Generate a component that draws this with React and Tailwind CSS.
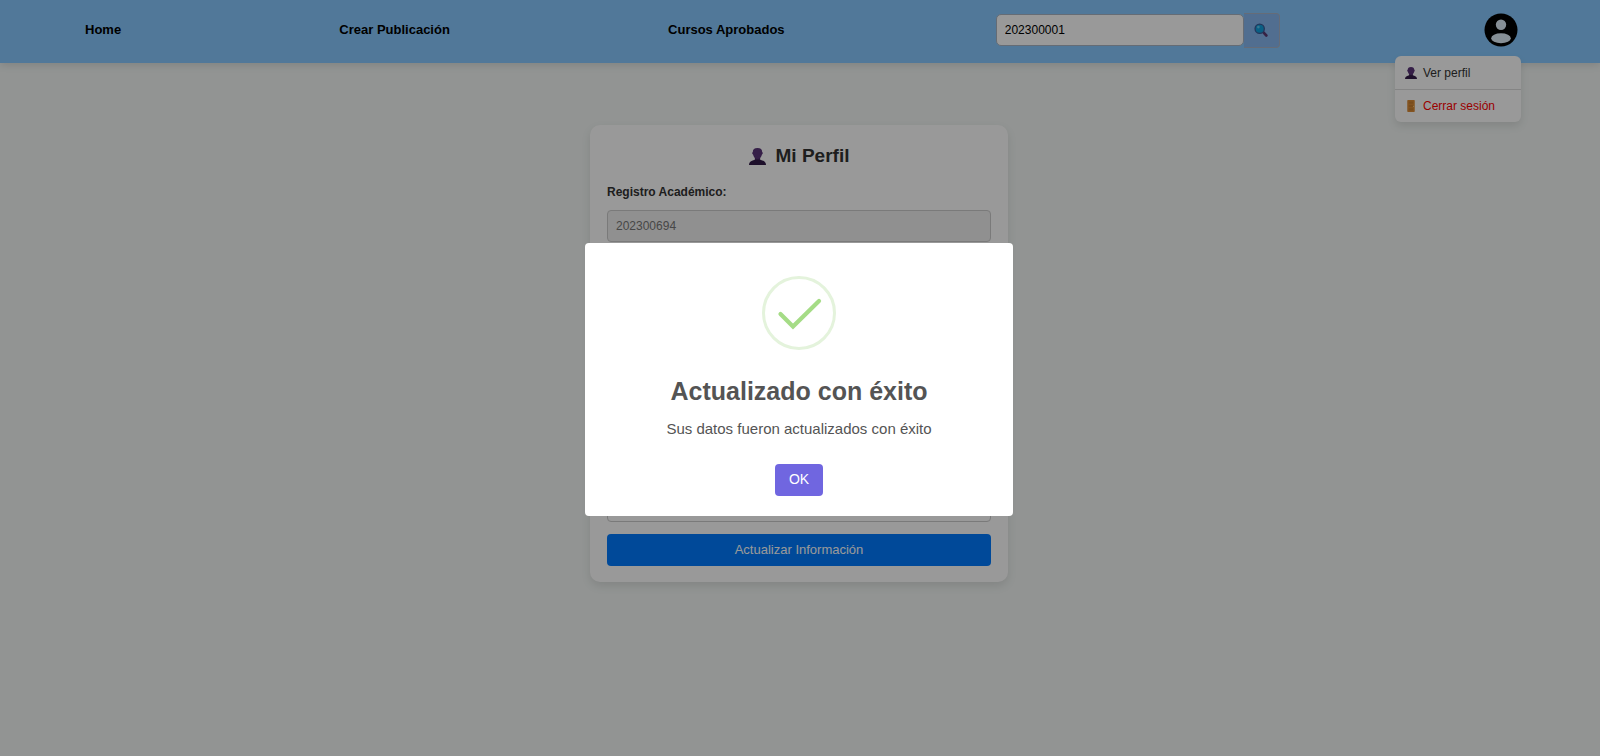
import React from "react";

function PersonIcon({ className }) {
  return (
    <svg viewBox="0 0 16 16" className={className} aria-hidden="true">
      <path d="M5.500 8h5v4h-5z" fill="#472860" />
      <path d="M8 0C5 0 3.600 1.500 3.600 3.800c-.8.200-.8 2 .2 2.400C4.300 8.800 6 10.400 8 10.400s3.700-1.600 4.200-4.200c1-.4 1-2.200.2-2.400C12.400 1.500 11 0 8 0z" fill="#5a3478" />
      <path d="M0 16c0-2.600 1.400-4 5.500-5h5c4.100 1 5.500 2.400 5.500 5z" fill="#331c49" />
    </svg>
  );
}

function DoorIcon({ className }) {
  return (
    <svg viewBox="0 0 16 16" className={className} aria-hidden="true">
      <rect x="3" y="0" width="10" height="16" rx="1" fill="#dc8d38" />
      <rect x="5" y="2" width="6" height="3" fill="#c97f31" />
      <rect x="5" y="6.500" width="6" height="3" fill="#c97f31" />
      <rect x="5" y="11" width="6" height="3" fill="#c97f31" />
      <circle cx="11.500" cy="8.500" r=".7" fill="#ffd27a" />
    </svg>
  );
}

function SearchIcon({ className }) {
  return (
    <svg viewBox="0 0 16 16" className={className} aria-hidden="true">
      <path d="M10.500 10.500l3.600 3.800" stroke="#5c3a72" strokeWidth="3" strokeLinecap="round" />
      <circle cx="6.500" cy="6.500" r="5.300" fill="#0f9fdc" stroke="#3a5c98" strokeWidth="1.500" />
      <circle cx="5" cy="4.700" r="1.500" fill="#5cc8f2" />
    </svg>
  );
}

function AvatarIcon({ className }) {
  return (
    <svg viewBox="0 0 34 34" className={className} aria-hidden="true">
      <circle cx="17" cy="17" r="16.500" fill="#000" />
      <circle cx="17" cy="11.800" r="5.200" fill="#e0eefa" />
      <ellipse cx="17" cy="25.300" rx="9.800" ry="5" fill="#e0eefa" />
    </svg>
  );
}

const links = ["Home", "Crear Publicación", "Cursos Aprobados"];

const fields = [
  { id: "registro", label: "Registro Académico:", value: "202300694", disabled: true },
  { id: "nombres", label: "Nombres:" },
  { id: "apellidos", label: "Apellidos:" },
  { id: "correo", label: "Correo:" },
  { id: "clave", label: "Contraseña:", type: "password" },
];

function Header() {
  return (
    <header className="relative bg-[#87c9ff] pb-[3px] shadow-[0_2px_8px_rgba(0,0,0,0.12)]">
      <nav className="flex h-[60px] items-center justify-between pr-[82px] pl-[78px]">
        {links.map((text) => (
          <a key={text} href="#" className="px-[7px] text-[13px] leading-5 font-bold text-black">
            {text}
          </a>
        ))}
        <form className="flex items-center">
          <input
            aria-label="Buscar registro"
            defaultValue="202300001"
            className="h-8 w-[248px] rounded-[5px] border border-[#a8b4c4] bg-white px-2 text-[12px] text-black"
          />
          <button
            type="button"
            aria-label="Buscar"
            className="flex h-[35px] w-[36px] items-center justify-center rounded-r-[4px] border border-l-0 border-[#a8b4c8] bg-[#88b7f0]"
          >
            <SearchIcon className="size-[14px]" />
          </button>
        </form>
        <button type="button" aria-label="Menú de usuario">
          <AvatarIcon className="size-[34px]" />
        </button>
      </nav>
      <div className="absolute top-[56px] right-[79px] w-[126px] overflow-hidden rounded-[6px] bg-white pt-px text-[12px] leading-4 shadow-[0_4px_8px_rgba(0,0,0,0.1)]">
        <a href="#" className="flex items-center gap-1.5 border-b border-[#dddddd] px-[10px] py-2 text-[#333333]">
          <PersonIcon className="size-3" />
          Ver perfil
        </a>
        <a href="#" className="flex items-center gap-1.5 px-[10px] py-2 text-[#ff0000]">
          <DoorIcon className="size-3" />
          Cerrar sesión
        </a>
      </div>
    </header>
  );
}

function ProfileCard() {
  return (
    <section className="w-[418px] rounded-[10px] bg-white px-[17px] pt-[19px] pb-4 shadow-[0_4px_10px_rgba(0,0,0,0.1)]">
      <h1 className="flex items-center justify-center gap-[10px] text-[19px] leading-6 font-bold text-[#333333]">
        <PersonIcon className="size-[17px]" />
        Mi Perfil
      </h1>
      <form className="mt-4">
        {fields.map((f) => (
          <div key={f.id} className="mb-3">
            <label htmlFor={f.id} className="mb-[10px] block text-[12px] leading-4 font-bold text-[#333333]">
              {f.label}
            </label>
            <input
              id={f.id}
              type={f.type || "text"}
              defaultValue={f.value}
              disabled={f.disabled}
              className="block h-8 w-full rounded-[4px] border border-[#cccccc] bg-white px-2 text-[12px] disabled:bg-[#f0f0f0] disabled:text-[#777777]"
            />
          </div>
        ))}
        <button type="button" className="h-8 w-full rounded-[4px] bg-[#007bff] text-[13px] text-white">
          Actualizar Información
        </button>
      </form>
    </section>
  );
}

function SuccessDialog() {
  return (
    <div className="fixed inset-0 flex items-center justify-center bg-black/40 pt-[2px] pr-[2px]">
      <div
        role="dialog"
        aria-modal="true"
        aria-labelledby="dialog-title"
        className="flex w-[428px] flex-col items-center rounded-[4px] bg-white pt-[33px] pb-5 text-[#545454]"
      >
        <svg viewBox="0 0 74 74" className="size-[74px]" aria-hidden="true">
          <circle cx="37" cy="37" r="35.500" fill="none" stroke="#e4f3dc" strokeWidth="3" />
          <path d="M18.500 38L31 50.500L57 25" fill="none" stroke="#a5dc86" strokeWidth="4.200" strokeLinecap="round" />
        </svg>
        <h2 id="dialog-title" className="mt-[25px] text-[25px] leading-8 font-bold">
          Actualizado con éxito
        </h2>
        <p className="mt-3 text-[15px] leading-5">Sus datos fueron actualizados con éxito</p>
        <button type="button" className="mt-[25px] h-8 w-12 rounded-[4px] bg-[#7066e0] text-[14px] text-white">
          OK
        </button>
      </div>
    </div>
  );
}

export default function App() {
  return (
    <div className="min-h-screen bg-[#f3f7f5] font-['Liberation_Sans',Arial,sans-serif]">
      <Header />
      <main className="flex justify-center pt-[62px] pr-[2px]">
        <ProfileCard />
      </main>
      <SuccessDialog />
    </div>
  );
}
